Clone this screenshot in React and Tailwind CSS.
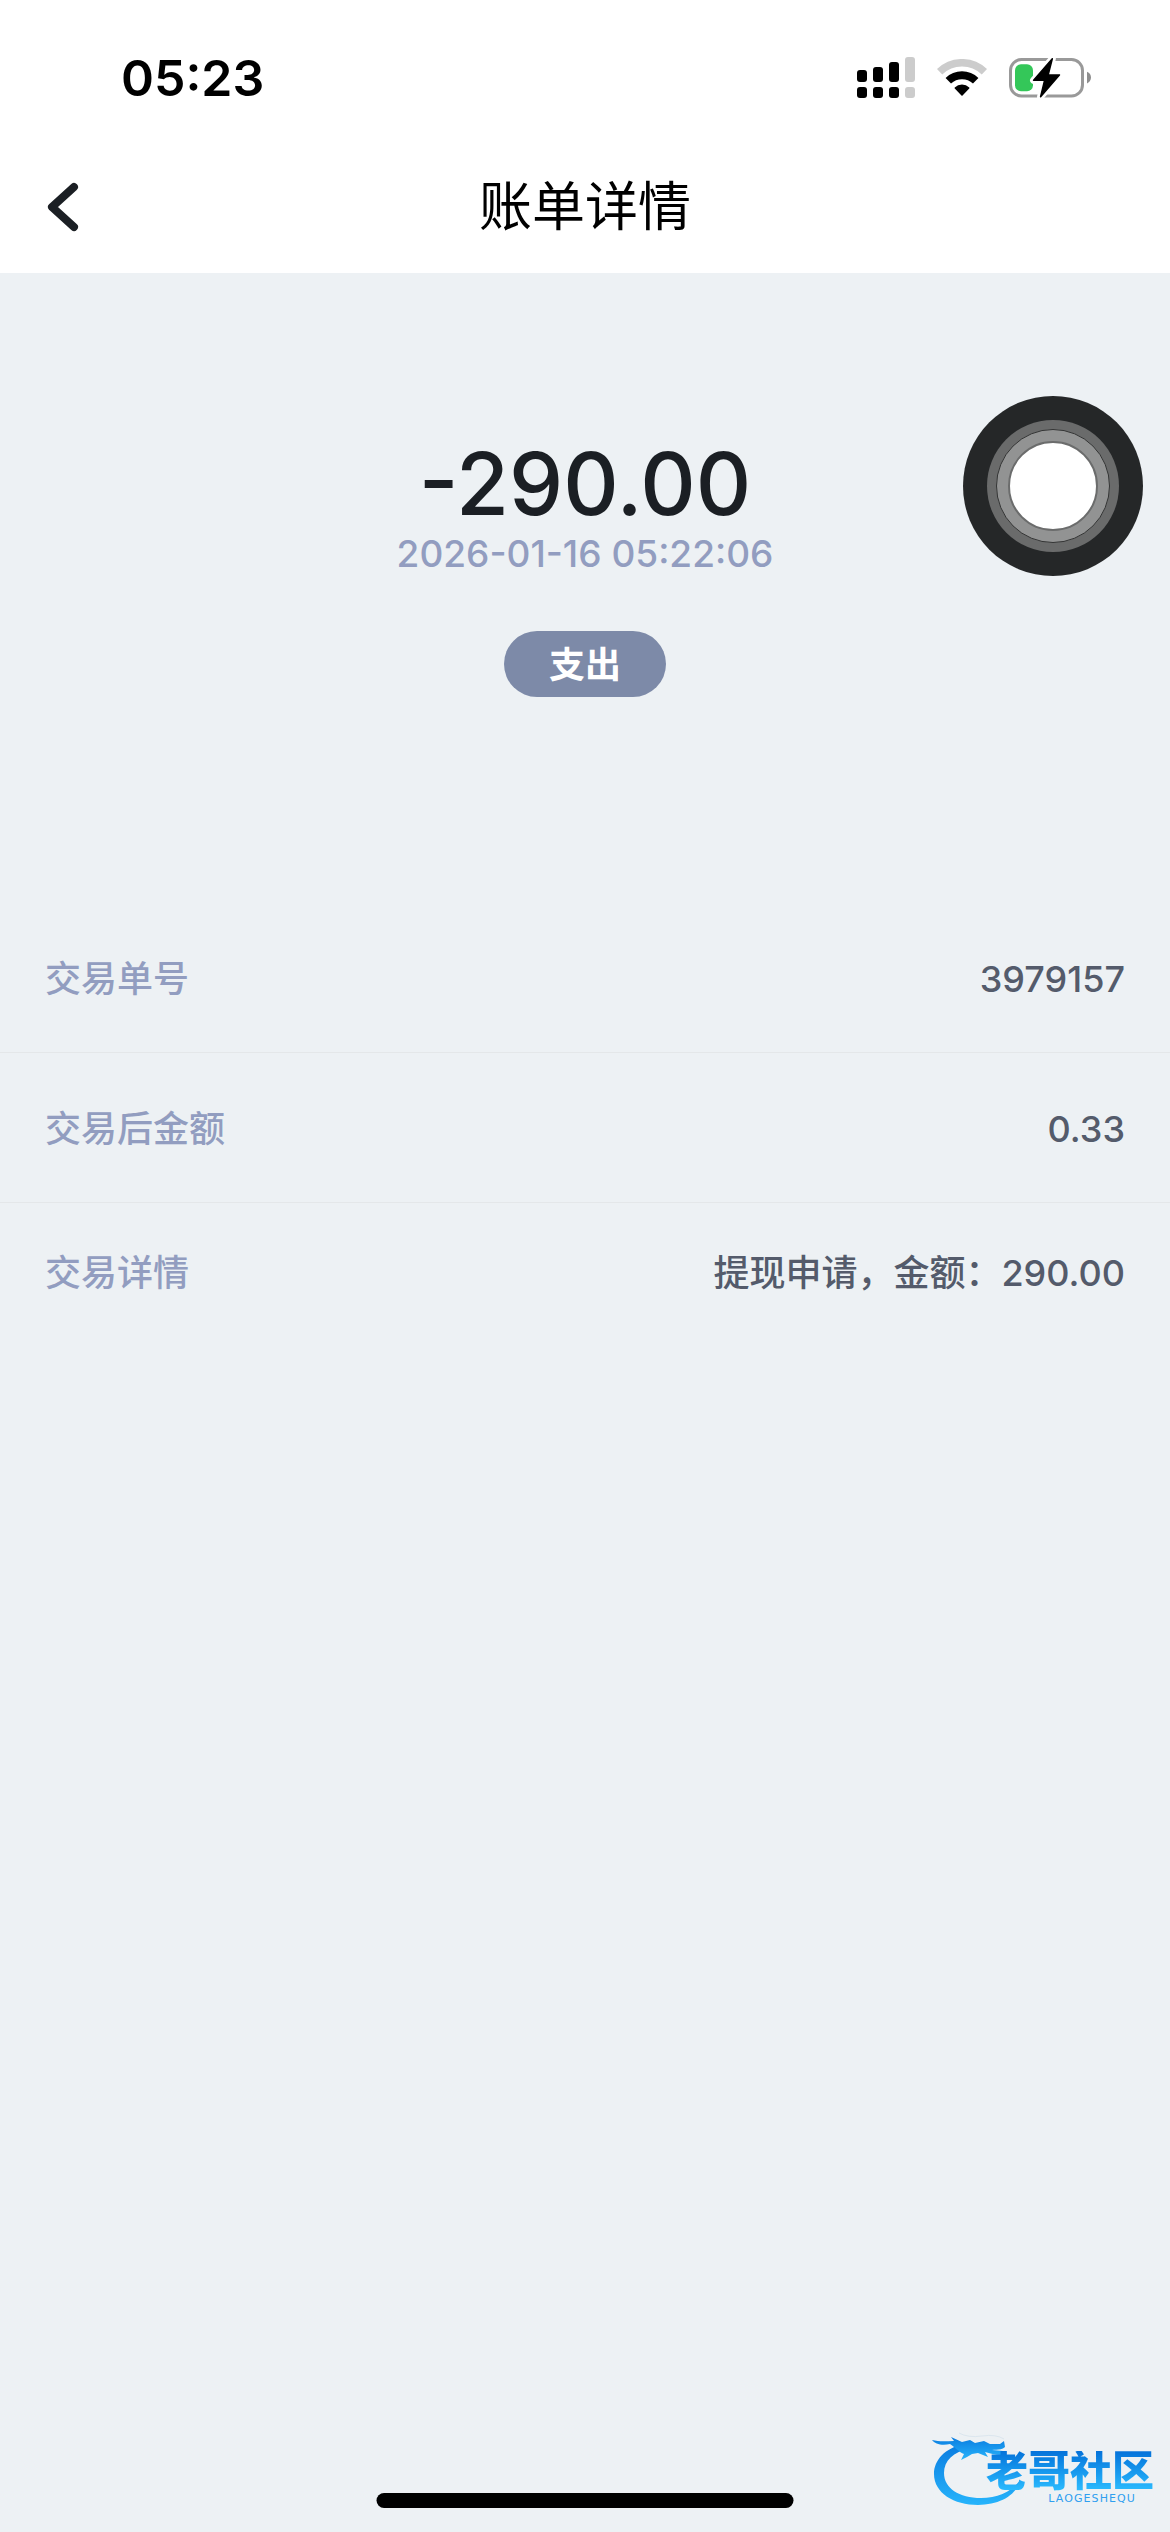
const records = [
  { label: '交易单号', value: '3979157' },
  { label: '交易后金额', value: '0.33' },
  { label: '交易详情', value: '提现申请，金额：290.00' },
];

function SignalIcon() {
  return (
    <svg width="58" height="41" viewBox="0 0 58 41" aria-hidden="true">
      <g fill="#000">
        <rect x="0" y="13" width="10" height="12" rx="3" />
        <rect x="16" y="10" width="10" height="15" rx="3" />
        <rect x="32" y="5" width="10" height="20" rx="3" />
        <rect x="0" y="30" width="10" height="11" rx="3" />
        <rect x="16" y="30" width="10" height="11" rx="3" />
        <rect x="32" y="30" width="10" height="11" rx="3" />
      </g>
      <g fill="#cccccc">
        <rect x="48" y="0" width="10" height="25" rx="3" />
        <rect x="48" y="30" width="10" height="11" rx="3" />
      </g>
    </svg>
  );
}

function WifiIcon() {
  return (
    <svg width="50" height="38" viewBox="0 0 50 38" fill="none" aria-hidden="true">
      <path d="M2.6 12.8A32.3 32.3 0 0 1 47.4 12.8" stroke="#cccccc" strokeWidth="7.6" />
      <path d="M11.3 21.8A19.7 19.7 0 0 1 38.7 21.8" stroke="#000" strokeWidth="7.8" />
      <path d="M18.3 29A9.6 9.6 0 0 1 31.7 29L25 36Z" fill="#000" stroke="#000" strokeWidth="1.5" strokeLinejoin="round" />
    </svg>
  );
}

function BatteryIcon() {
  const bolt = 'M43.3 0.8L24.6 22.3H35.6L31.6 38.7L50.4 16.9H39.2Z';
  return (
    <svg width="82" height="40" viewBox="0 0 82 40" fill="none" aria-hidden="true">
      <rect x="1.5" y="1.5" width="72" height="36.5" rx="11" stroke="#999999" strokeWidth="3" />
      <path d="M78 13.8C80.6 14.8 82 17 82 19.6S80.6 24.4 78 25.4Z" fill="#8e8e8e" />
      <rect x="6" y="6.3" width="18" height="27" rx="6" fill="#34c759" />
      <path d={bolt} fill="#fff" stroke="#fff" strokeWidth="7" strokeLinejoin="round" />
      <path d={bolt} fill="#000" stroke="#000" strokeWidth="1.5" strokeLinejoin="round" />
    </svg>
  );
}

function StatusBar() {
  return (
    <div className="flex h-[141px] items-center justify-between pt-[14px] pr-[79px] pl-[121px]">
      <span className="text-[50px] leading-none font-semibold text-black">05:23</span>
      <div className="flex items-center gap-[22px]">
        <SignalIcon />
        <WifiIcon />
        <BatteryIcon />
      </div>
    </div>
  );
}

function AssistiveTouch() {
  return (
    <button
      type="button"
      aria-label="辅助触控"
      className="absolute top-[396px] right-[27px] flex size-[180px] items-center justify-center rounded-full bg-[#252728]"
    >
      <span className="flex size-[132px] items-center justify-center rounded-full bg-[#6a6b6b]">
        <span className="flex size-[114px] items-center justify-center rounded-full border border-[#343535] bg-[#929393]">
          <span className="size-[90px] rounded-full border-2 border-[#6b6c6c] bg-white" />
        </span>
      </span>
    </button>
  );
}

function Watermark() {
  return (
    <div className="absolute right-[16px] bottom-[24px] h-[80px] w-[222px]">
      <svg width="222" height="80" viewBox="0 0 222 80" className="absolute inset-0" aria-hidden="true">
        <defs>
          <linearGradient id="dragon" x1="0" y1="0" x2="0" y2="1">
            <stop offset="0" stopColor="#0a7ce0" />
            <stop offset="1" stopColor="#27b4fb" />
          </linearGradient>
        </defs>
        <g fill="url(#dragon)">
          <path d="M32 16C13 20 2 32 2 46C2 65 22 77 46 77C68 77 85 67 88 52C81 63 66 70 49 70C27 70 12 60 12 45C12 33 21 24 38 20Z" />
          <path d="M0 12C8 14 14 13 22 13L19 9L30 14L38 12L43 15L52 13L58 16L68 16L72 13L73 19C69 23 64 21 60 22L71 23L69 27C63 27 58 25 53 24L56 29L46 25L40 26L35 29L29 32L32 26C27 24 24 20 18 16C10 18 3 16 0 12Z" />
        </g>
        <path d="M27 5Q36 10 50 8T72 11" fill="none" stroke="#dbe6ee" strokeWidth="1" />
      </svg>
      <div className="relative flex flex-col items-end gap-[3px] pt-[23px] font-black">
        <span className="bg-linear-to-b from-[#0672da] to-[#2cbcff] bg-clip-text text-[42px] leading-[40px] text-transparent">
          老哥社区
        </span>
        <span className="pr-[18px] font-['DejaVu_Sans'] text-[11px] leading-[10px] font-normal tracking-widest text-[#2f9ff0]">
          LAOGESHEQU
        </span>
      </div>
    </div>
  );
}

export default function App() {
  return (
    <div className="relative min-h-screen bg-[#edf1f4] font-[Inter,'Noto_Sans_CJK_SC',sans-serif]">
      <header className="bg-white">
        <StatusBar />
        <div className="grid h-[132px] grid-cols-[1fr_auto_1fr] items-center px-[42px]">
          <button type="button" aria-label="返回" className="justify-self-start">
            <svg width="42" height="54" viewBox="0 0 42 54" fill="none" aria-hidden="true">
              <path d="M32 7L10 27L32 47" stroke="#1b1f24" strokeWidth="8" strokeLinecap="round" strokeLinejoin="round" />
            </svg>
          </button>
          <h1 className="text-[53px] leading-none text-black">账单详情</h1>
        </div>
      </header>

      <main>
        <section className="flex flex-col items-center pt-[162px]">
          <p className="text-[86px] leading-[98px] font-medium text-[#1b1f24]">-290.00</p>
          <time dateTime="2026-01-16T05:22:06" className="text-[37px] leading-[42px] font-medium text-[#929dc0]">
            2026-01-16 05:22:06
          </time>
          <span className="mt-[56px] flex h-[66px] w-[162px] items-center justify-center rounded-full bg-[#7d8aa8] pt-[2px] text-[36px] leading-none font-semibold text-white">
            支出
          </span>
        </section>

        <dl className="mt-[206px] text-[36px] leading-[48px] font-medium">
          {records.map((item) => (
            <div
              key={item.label}
              className="flex h-[150px] items-center justify-between border-b border-[#e4e7e9] px-[45px] pt-[2px] last:h-[138px] last:border-b-0"
            >
              <dt className="text-[#929dc0]">{item.label}</dt>
              <dd className="text-[#545b6b]">{item.value}</dd>
            </div>
          ))}
        </dl>
      </main>

      <AssistiveTouch />
      <Watermark />
      <div className="absolute bottom-[24px] left-1/2 h-[15px] w-[417px] -translate-x-1/2 rounded-full bg-black" />
    </div>
  );
}
